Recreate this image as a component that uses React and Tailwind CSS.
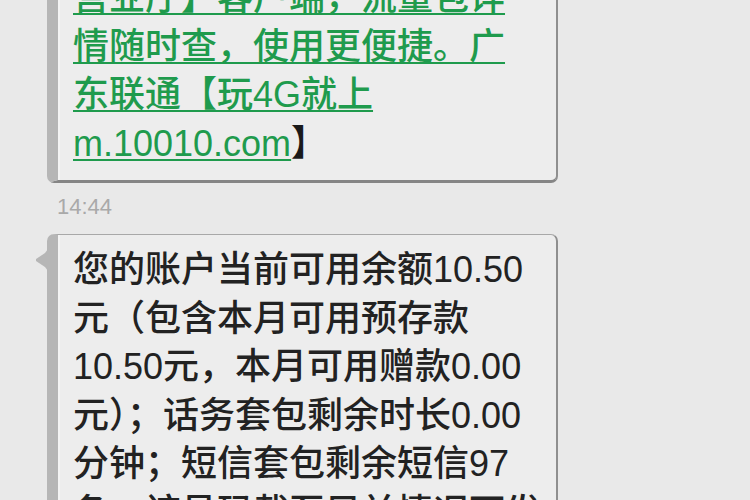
import { useMemo } from "react";

const linkLines = [
  { text: "营业厅】客户端，流量包详", tail: "" },
  { text: "情随时查，使用更便捷。广", tail: "" },
  { text: "东联通【玩4G就上", tail: "" },
  { text: "m.10010.com", tail: "】" }
];

const balanceLines = [
  "您的账户当前可用余额10.50",
  "元（包含本月可用预存款",
  "10.50元，本月可用赠款0.00",
  "元）；话务套包剩余时长0.00",
  "分钟；短信套包剩余短信97",
  "条，该号码截至目前情况可发"
];

function Bubble({ children, className = "", tail = false }) {
  return (
    <div
      className={`relative ml-[47px] w-[511px] rounded-[7px] border-t border-r-2 border-b-[3px] border-l-[11px] border-t-[#a8a8a8] border-r-[#8f8f8f] border-b-[#858585] border-l-[#b6b6b6] bg-[#ededed] shadow-[inset_2px_0_0_#f4f4f4] ${className}`}
    >
      {tail ? (
        <svg
          className="absolute left-[-22px] top-[14px]"
          width="12"
          height="22"
          viewBox="0 0 12 22"
        >
          <path d="M12 0 L12 22 L9 18 L0 12 L0 10 L9 4 Z" fill="#b6b6b6" />
        </svg>
      ) : null}
      {children}
    </div>
  );
}

export default function App() {
  const font = useMemo(
    () => ({ fontFamily: '"Liberation Sans", "Noto Sans CJK SC", sans-serif' }),
    []
  );

  return (
    <div
      className="h-[500px] w-[750px] overflow-hidden bg-[#e9e9e9]"
      style={font}
    >
      <Bubble className="mt-[-34px] pt-[7px] pb-[12px] pl-[15px]">
        {linkLines.map((line) => (
          <div
            key={line.text}
            className="whitespace-nowrap text-[36px] font-medium leading-[48.5px] text-[#1f9b4d]"
          >
            <span className="underline decoration-2 underline-offset-[3px]">{line.text}</span>
            {line.tail ? <span className="text-[#1a1a1a]">{line.tail}</span> : null}
          </div>
        ))}
      </Bubble>

      <p className="ml-[57px] mt-[11px] text-[22px] leading-[26px] text-[#a9a9a9]">14:44</p>

      <Bubble tail className="mt-[14px] pt-[11px] pb-[12px] pl-[15px]">
        {balanceLines.map((line) => (
          <div
            key={line}
            className="whitespace-nowrap text-[36px] font-medium leading-[48.5px] text-[#222222]"
          >
            {line}
          </div>
        ))}
      </Bubble>
    </div>
  );
}
